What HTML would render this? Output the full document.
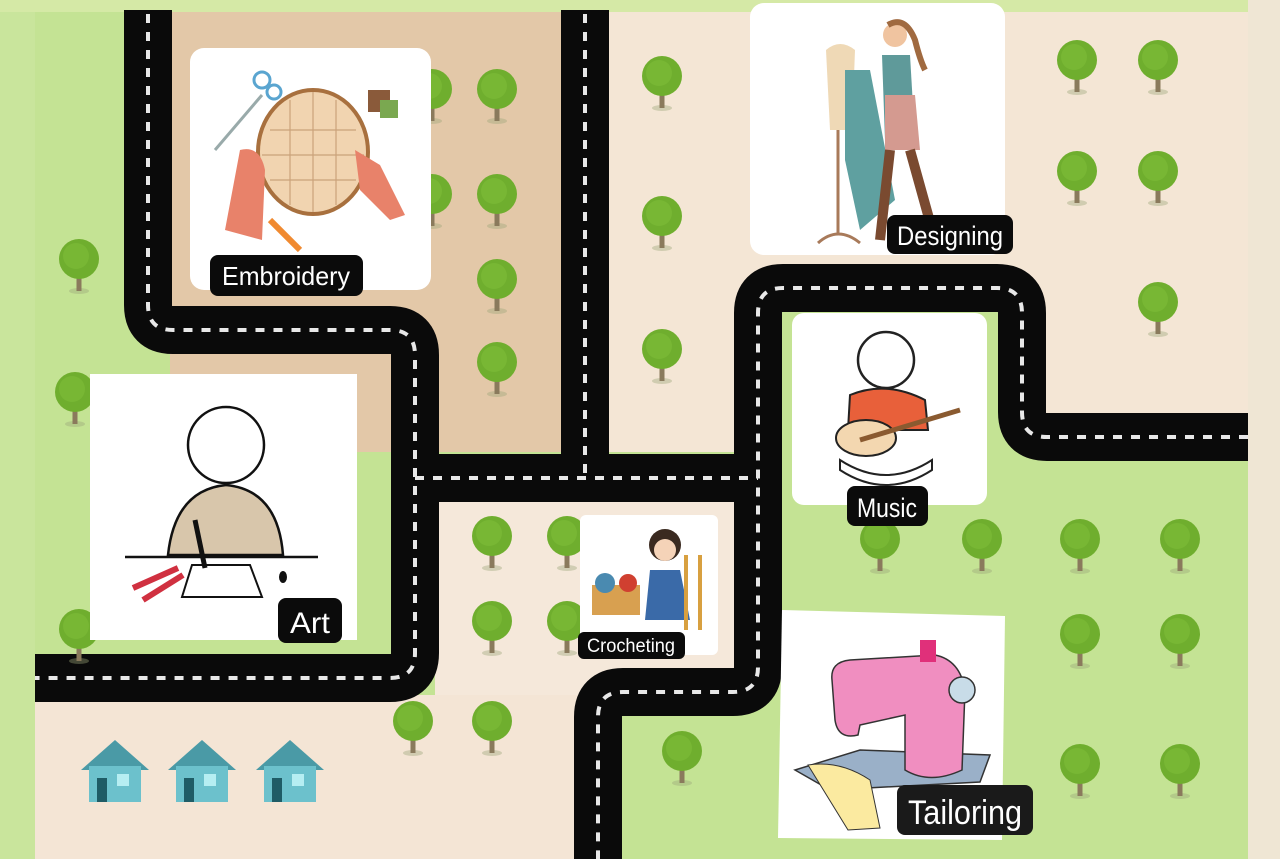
<!DOCTYPE html>
<html><head><meta charset="utf-8"><style>
html,body{margin:0;padding:0;width:1280px;height:859px;overflow:hidden;background:#c9e59c}
svg{display:block}
.lbl{font-family:"Liberation Sans","DejaVu Sans",sans-serif;fill:#fff}
</style></head><body>
<svg width="1280" height="859" viewBox="0 0 1280 859" xmlns="http://www.w3.org/2000/svg">
<defs>
<g id="tree"><ellipse cx="0" cy="26" rx="10" ry="3" fill="#9aa577" opacity=".4"/><rect x="-2.5" y="2" width="5" height="24" fill="#8a7a5c"/><circle cx="0" cy="-6" r="20" fill="#6fae2e"/><circle cx="-3" cy="-9" r="13" fill="#7cbb38" opacity=".7"/></g>
<g id="house"><path d="M-34 0 L0 -30 L34 0 Z" fill="#4a9aa6"/><rect x="-26" y="-4" width="52" height="36" fill="#6cc1cc"/><rect x="-18" y="8" width="10" height="24" fill="#1f5c66"/><rect x="2" y="4" width="12" height="12" fill="#b6eef2"/></g>
</defs>
<rect x="0" y="0" width="1280" height="12" fill="#d5e9a6"/>
<rect x="1248" y="0" width="32" height="859" fill="#efe6d4"/>
<rect x="35" y="12" width="1213" height="847" fill="#c4e394"/>
<rect x="170" y="12" width="395" height="440" fill="#e3c8a8"/>
<rect x="605" y="12" width="643" height="440" fill="#f4e6d5"/>
<rect x="780" y="300" width="240" height="160" fill="#c4e394"/>
<rect x="780" y="455" width="468" height="404" fill="#c4e394"/>
<rect x="435" y="495" width="305" height="200" fill="#f5e8da"/>
<rect x="35" y="695" width="560" height="164" fill="#f4e5d5"/>
<rect x="615" y="710" width="170" height="149" fill="#c4e394"/>
<g fill="none" stroke="#0a0a0a" stroke-width="48" stroke-linejoin="round">
<path d="M148 10 V305 Q148 330 173 330 H390 Q415 330 415 355 V653 Q415 678 390 678 H35"/>
<path d="M585 10 V478"/>
<path d="M415 478 H758"/>
<path d="M1248 437 H1047 Q1022 437 1022 412 V313 Q1022 288 997 288 H783 Q758 288 758 313 V667 Q758 692 733 692 H623 Q598 692 598 717 V859"/>
</g>
<rect x="120" y="0" width="500" height="10" fill="#d5e9a6"/>
<g fill="none" stroke="#e8e8e8" stroke-width="4" stroke-dasharray="9 9">
<path d="M148 14 V305 Q148 330 173 330 H390 Q415 330 415 355 V653 Q415 678 390 678 H35"/>
<path d="M585 14 V478"/>
<path d="M415 478 H758"/>
<path d="M1248 437 H1047 Q1022 437 1022 412 V313 Q1022 288 997 288 H783 Q758 288 758 313 V667 Q758 692 733 692 H623 Q598 692 598 717 V859"/>
</g>
<g>
<use href="#tree" x="79" y="265"/><use href="#tree" x="75" y="398"/><use href="#tree" x="79" y="635"/>
<use href="#tree" x="432" y="95"/><use href="#tree" x="497" y="95"/><use href="#tree" x="432" y="200"/><use href="#tree" x="497" y="200"/><use href="#tree" x="497" y="285"/><use href="#tree" x="497" y="368"/>
<use href="#tree" x="662" y="82"/><use href="#tree" x="662" y="222"/><use href="#tree" x="662" y="355"/>
<use href="#tree" x="1077" y="66"/><use href="#tree" x="1158" y="66"/><use href="#tree" x="1077" y="177"/><use href="#tree" x="1158" y="177"/><use href="#tree" x="1158" y="308"/>
<use href="#tree" x="492" y="542"/><use href="#tree" x="567" y="542"/><use href="#tree" x="492" y="627"/><use href="#tree" x="567" y="627"/>
<use href="#tree" x="413" y="727"/><use href="#tree" x="492" y="727"/><use href="#tree" x="682" y="757"/>
<use href="#tree" x="880" y="545"/><use href="#tree" x="982" y="545"/><use href="#tree" x="1080" y="545"/><use href="#tree" x="1180" y="545"/>
<use href="#tree" x="1080" y="640"/><use href="#tree" x="1180" y="640"/><use href="#tree" x="1080" y="770"/><use href="#tree" x="1180" y="770"/>
</g>
<use href="#house" x="115" y="770"/><use href="#house" x="202" y="770"/><use href="#house" x="290" y="770"/>
<rect x="190" y="48" width="241" height="242" rx="14" fill="#fff"/>
<path d="M215 150 L262 95" stroke="#9aa" stroke-width="3"/><circle cx="262" cy="80" r="8" fill="none" stroke="#5aa5d0" stroke-width="3"/><circle cx="274" cy="92" r="7" fill="none" stroke="#5aa5d0" stroke-width="3"/>
<ellipse cx="313" cy="152" rx="55" ry="62" fill="#f1d4b0" stroke="#a8703e" stroke-width="4"/>
<g stroke="#caa27a" stroke-width="1.2"><path d="M270 130 H356 M262 155 H364 M270 180 H356 M290 100 V205 M313 92 V212 M336 100 V205"/></g>
<path d="M225 230 L240 150 Q260 145 265 170 L262 240 Z" fill="#e8826a"/>
<path d="M355 150 L380 165 L405 215 L390 220 L360 190 Z" fill="#e8826a"/>
<rect x="368" y="90" width="22" height="22" fill="#8a5a3a"/><rect x="380" y="100" width="18" height="18" fill="#7aa850"/>
<path d="M270 220 L300 250" stroke="#f08a30" stroke-width="6"/>
<rect x="210" y="255" width="153" height="41" rx="8" fill="#0b0b0b"/>
<text x="222" y="285" class="lbl" font-size="26" textLength="128" lengthAdjust="spacingAndGlyphs">Embroidery</text>
<rect x="750" y="3" width="255" height="252" rx="14" fill="#fff"/>
<path d="M826 50 Q840 38 855 50 L852 130 L830 130 Z" fill="#efd9b6"/>
<path d="M838 130 V235 M818 243 Q838 225 860 243" stroke="#a87a5a" stroke-width="3" fill="none"/>
<path d="M845 70 L870 70 L895 200 L860 230 L845 160 Z" fill="#5fa0a0"/>
<circle cx="895" cy="35" r="12" fill="#f0c4a0"/><path d="M888 25 Q905 15 915 40 Q920 60 925 70" stroke="#a06a40" stroke-width="6" fill="none"/>
<path d="M882 55 L910 55 L915 140 L885 140 Z" fill="#5f9a9a"/><path d="M885 95 L915 95 L920 150 L885 150 Z" fill="#d49a90"/>
<path d="M890 150 L880 240 M910 150 L935 240" stroke="#7a4a30" stroke-width="10"/>
<rect x="887" y="215" width="126" height="39" rx="8" fill="#0b0b0b"/>
<text x="897" y="245" class="lbl" font-size="27" textLength="106" lengthAdjust="spacingAndGlyphs">Designing</text>
<rect x="792" y="313" width="195" height="192" rx="12" fill="#fff"/>
<circle cx="886" cy="360" r="28" fill="#fff" stroke="#222" stroke-width="2.5"/>
<path d="M850 395 Q886 380 925 400 L928 430 L848 430 Z" fill="#e8603a" stroke="#222" stroke-width="2"/>
<ellipse cx="866" cy="438" rx="30" ry="18" fill="#f3d7b0" stroke="#222" stroke-width="2"/>
<path d="M860 440 L960 410" stroke="#8a5a30" stroke-width="5"/>
<path d="M840 460 Q886 490 932 460 L932 470 Q886 500 840 470 Z" fill="#fff" stroke="#222" stroke-width="2"/>
<rect x="847" y="486" width="81" height="40" rx="8" fill="#0b0b0b"/>
<text x="857" y="517" class="lbl" font-size="27" textLength="60" lengthAdjust="spacingAndGlyphs">Music</text>
<rect x="90" y="374" width="267" height="266" fill="#fff"/>
<circle cx="226" cy="445" r="38" fill="#fff" stroke="#111" stroke-width="2.5"/>
<path d="M168 555 Q175 490 226 485 Q278 490 283 555 Z" fill="#d8c6ab" stroke="#111" stroke-width="2.5"/>
<path d="M125 557 H318" stroke="#111" stroke-width="2.5"/>
<path d="M192 565 L250 565 L262 597 L182 597 Z" fill="#fff" stroke="#111" stroke-width="2"/>
<path d="M133 588 L178 568 M143 600 L183 575" stroke="#d03040" stroke-width="6"/>
<path d="M195 520 L205 568" stroke="#111" stroke-width="5"/>
<ellipse cx="283" cy="577" rx="4" ry="6" fill="#111"/>
<rect x="278" y="598" width="64" height="45" rx="8" fill="#0b0b0b"/>
<text x="290" y="633" class="lbl" font-size="30" textLength="40" lengthAdjust="spacingAndGlyphs">Art</text>
<rect x="580" y="515" width="138" height="140" rx="6" fill="#fff"/>
<circle cx="665" cy="545" r="16" fill="#3a2a20"/><circle cx="665" cy="550" r="11" fill="#f5d3b8"/>
<path d="M650 570 L680 570 L690 620 L645 620 Z" fill="#3a6aa8"/>
<rect x="592" y="585" width="48" height="30" fill="#d8a050"/><circle cx="605" cy="583" r="10" fill="#4a8ab0"/><circle cx="628" cy="583" r="9" fill="#d04030"/>
<path d="M686 555 V630 M700 555 V630" stroke="#d8a040" stroke-width="4"/>
<rect x="578" y="632" width="107" height="27" rx="6" fill="#0b0b0b"/>
<text x="587" y="652" class="lbl" font-size="19" textLength="88" lengthAdjust="spacingAndGlyphs">Crocheting</text>
<path d="M782 610 L1005 616 L1002 840 L778 838 Z" fill="#fff"/>
<path d="M795 770 L860 750 L990 755 L980 782 L830 790 Z" fill="#9ab0c8" stroke="#333" stroke-width="1.5"/>
<path d="M832 680 Q830 662 850 660 L935 655 Q960 660 965 690 L962 770 Q930 785 905 770 L905 715 L860 725 L858 735 Q838 740 835 720 Z" fill="#f08ec0" stroke="#333" stroke-width="1.5"/>
<circle cx="962" cy="690" r="13" fill="#c8dce8" stroke="#333" stroke-width="1.5"/>
<rect x="920" y="640" width="16" height="22" fill="#e0307a"/>
<path d="M808 765 Q840 760 870 780 L880 828 L848 830 Z" fill="#fbeaa0" stroke="#333" stroke-width="1"/>
<rect x="897" y="785" width="136" height="50" rx="8" fill="#1a1a1a"/>
<text x="908" y="824" class="lbl" font-size="34" textLength="114" lengthAdjust="spacingAndGlyphs" fill="#f5efe0">Tailoring</text>
</svg>
</body></html>
